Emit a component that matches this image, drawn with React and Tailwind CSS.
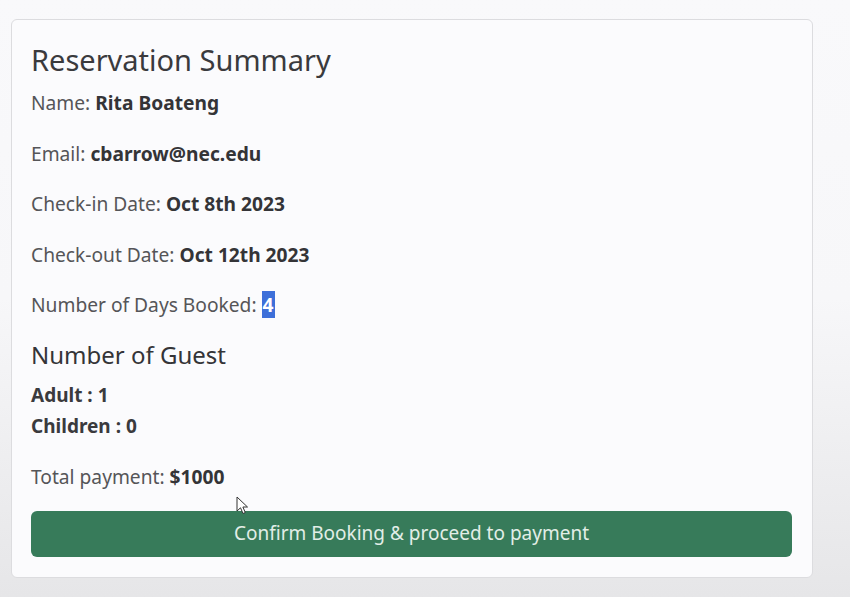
import React from "react";

const font = { fontFamily: '"Noto Sans", "Open Sans", sans-serif' };

const Row = ({ label, value, highlight }) => (
  <p className="mb-[20.5px] text-[19.2px] leading-[30px] text-[#555558]">
    {label}{" "}
    {highlight ? (
      <span className="bg-[#3d6fd9] px-[1px] font-bold text-white">{value}</span>
    ) : (
      <span className="font-bold text-[#343437]">{value}</span>
    )}
  </p>
);

const Cursor = () => (
  <svg
    className="pointer-events-none absolute left-[236px] top-[496px]"
    width="14"
    height="20"
    viewBox="0 0 14 20"
  >
    <path
      d="M1 1 L1 15 L4.5 11.8 L7 17.5 L9.3 16.5 L6.9 11 L11.5 11 Z"
      fill="#ffffff"
      stroke="#333"
      strokeWidth="1"
      strokeLinejoin="round"
    />
  </svg>
);

export default function App() {
  return (
    <div
      className="relative min-h-screen bg-gradient-to-b from-[#f9f9fb] via-[#f7f7f9] to-[#e6e6e8] px-[11px] pt-[19px]"
      style={font}
    >
      <div className="w-[802px] rounded-md border border-[#dcdcdf] bg-[#fbfbfd] pl-[19px] pr-5 pt-[21px] pb-5">
        <h3 className="mb-[9px] text-[29px] leading-[38px] font-normal text-[#3a3a3d]">
          Reservation Summary
        </h3>
        <Row label="Name:" value="Rita Boateng" />
        <Row label="Email:" value="cbarrow@nec.edu" />
        <Row label="Check-in Date:" value="Oct 8th 2023" />
        <Row label="Check-out Date:" value="Oct 12th 2023" />
        <Row label="Number of Days Booked:" value="4" highlight />
        <h5 className="-mt-[1px] mb-[10px] text-[24px] leading-[30px] text-[#343437]">
          Number of Guest
        </h5>
        <div className="text-[19px] leading-[31px] font-bold text-[#3a3a3d]">
          <div>Adult : 1</div>
          <div>Children : 0</div>
        </div>
        <p className="mt-5 mb-[19px] text-[19.2px] leading-[30px] text-[#555558]">
          Total payment: <span className="font-bold text-[#343437]">$1000</span>
        </p>
        <button className="flex h-[46px] w-full items-center justify-center rounded-md bg-[#377b5a] text-[19px] text-[#e2eee7]">
          Confirm Booking &amp; proceed to payment
        </button>
      </div>
      <Cursor />
    </div>
  );
}
